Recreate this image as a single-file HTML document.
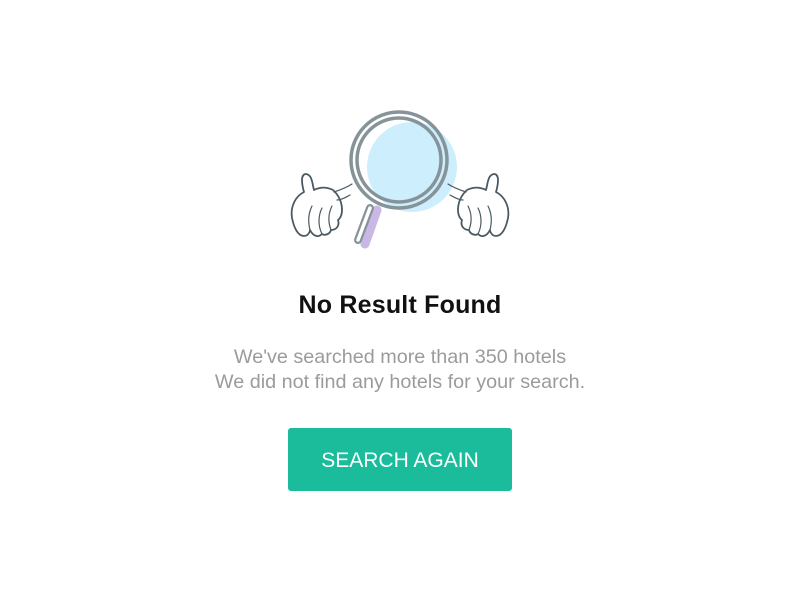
<!DOCTYPE html>
<html><head><style>
html,body{margin:0;padding:0;background:#fff;width:800px;height:600px;overflow:hidden;font-family:"Liberation Sans",sans-serif}
svg{position:absolute;left:0;top:0}
.t{position:absolute;left:0;width:800px;text-align:center}
h1{font-size:25px;font-weight:bold;color:#111;top:291px;margin:0;letter-spacing:0.2px}
.s{font-size:19.8px;color:#9b9b9b;line-height:25px;top:345px}
.b{position:absolute;left:288px;top:428px;width:224px;height:63px;background:#1abc9c;border-radius:3px;color:#fff;font-size:21px;line-height:65px;text-align:center}
</style></head><body>
<svg width="800" height="600">
<g fill="none" stroke-linecap="round">
<line x1="377" y1="210" x2="365" y2="244" stroke="#c9b8e6" stroke-width="9"/>
<circle cx="412" cy="167" r="45" fill="#cdeefd" stroke="none"/>
<line x1="370" y1="208" x2="358" y2="240" stroke="#869399" stroke-width="8"/>
<line x1="370" y1="208" x2="358" y2="240" stroke="#fff" stroke-width="3.5"/>
<circle cx="399" cy="160" r="48" stroke="#869399" stroke-width="3.5"/>
<circle cx="399" cy="160" r="42" stroke="#869399" stroke-width="3.5"/>
<g id="h" stroke="#4a5a63" stroke-width="1.8" fill="#fff" stroke-linejoin="round">
<path d="M333 190 C325 186 318 188 314 190 C312 182 312 175 306 174 C300 174 302 185 304 192 C296 196 290 206 292 218 C294 228 298 236 304 236 C308 236 310 232 310 230 C313 236 318 238 322 234 C325 236 330 234 331 230 C336 230 340 226 338 220 C344 216 344 200 333 190 Z"/>
<path d="M334 192 C340 190 346 188 352 184" stroke-width="1.2"/>
<path d="M337 200 C342 200 346 197 350 195" stroke-width="1.2"/>
<path d="M310 230 C308 222 308 214 312 206 M322 234 C318 226 318 216 322 208 M331 230 C328 222 328 214 332 206" stroke-width="1.2" fill="none"/>
</g>
<use href="#h" transform="translate(800,0) scale(-1,1)"/>
</g>
</svg>
<h1 class="t">No Result Found</h1>
<div class="t s">We've searched more than 350 hotels<br>We did not find any hotels for your search.</div>
<div class="b">SEARCH AGAIN</div>
</body></html>
